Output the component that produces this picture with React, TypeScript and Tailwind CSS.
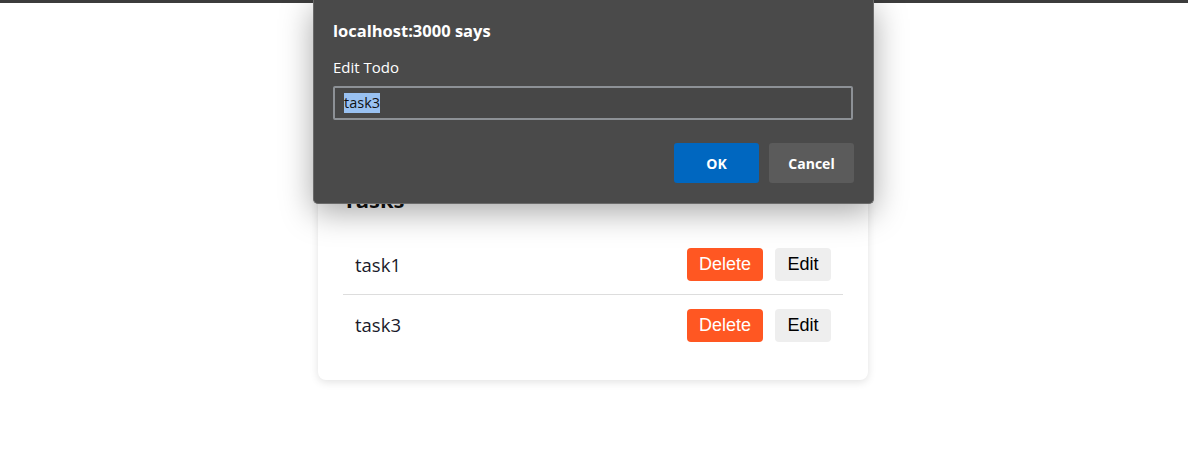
import React from "react";

const tasks = ["task1", "task3"];

export default function App() {
  return (
    <div className="relative min-h-[455px] w-full bg-white overflow-hidden">
      <div className="h-[3px] w-full bg-[#3c3c3c]" />
      <div className="pt-[147px] pr-[2px]">
        <div className="mx-auto w-[550px] rounded-[8px] bg-white p-[25px] shadow-[0_2px_8px_rgba(0,0,0,0.12)]">
          <h2 className="mt-[10px] mb-[22px] text-[22px] leading-[28px] font-bold text-[#111] [font-family:'Open_Sans',sans-serif]">
            Tasks
          </h2>
          <ul>
            {tasks.map((t, i) => (
              <li
                key={t}
                className={`flex h-[60px] items-center justify-between pl-[12px] pr-[12px] ${
                  i < tasks.length - 1 ? "border-b border-[#dddddd]" : ""
                }`}
              >
                <span className="text-[18.5px] text-[#1a1a2a] [font-family:'Open_Sans',sans-serif]">{t}</span>
                <div className="flex gap-[12px] [font-family:'Liberation_Sans',Arial,sans-serif] text-[18px]">
                  <button className="h-[33px] w-[76px] rounded-[4px] bg-[#ff5722] text-white">Delete</button>
                  <button className="h-[33px] w-[56px] rounded-[4px] bg-[#eeeeee] text-black">Edit</button>
                </div>
              </li>
            ))}
          </ul>
        </div>
      </div>

      <div className="absolute left-[313px] top-0 h-[204px] w-[561px] rounded-b-[5px] border-x border-b border-[#6b6b6b] bg-[#4a4a4a] px-[19px] pt-[19px] shadow-[0_8px_32px_rgba(0,0,0,0.35)] [font-family:'Open_Sans',sans-serif]">
        <div className="text-[16.5px] leading-[24px] font-bold text-white">localhost:3000 says</div>
        <div className="mt-[14px] text-[15px] leading-[20px] text-white">Edit Todo</div>
        <div className="mt-[9px] flex h-[34px] w-[520px] items-center rounded-[2px] border-2 border-[#8d9196] bg-[#474747] px-[9px]">
          <span className="bg-[#99c1f1] text-[14.5px] leading-[20px] text-[#111]">task3</span>
        </div>
        <div className="mt-[23px] flex justify-end gap-[10px]">
          <button className="h-[40px] w-[85px] rounded-[3px] bg-[#0067c0] text-[14px] font-bold text-white">OK</button>
          <button className="h-[40px] w-[85px] rounded-[3px] bg-[#5b5b5b] text-[14px] font-bold text-white">Cancel</button>
        </div>
      </div>
    </div>
  );
}
